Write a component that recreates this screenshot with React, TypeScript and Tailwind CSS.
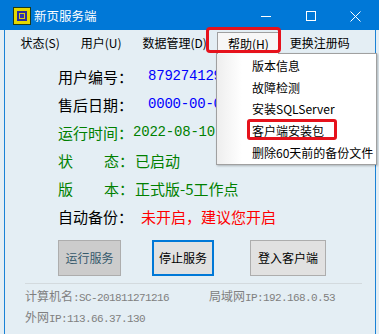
import React from "react";

const Mono = ({ children, className = "" }: { children: React.ReactNode; className?: string }) => (
  <span className={`font-['Liberation_Mono',monospace] ${className}`}>{children}</span>
);

const menuItems = ["状态(S)", "用户(U)", "数据管理(D)"];
const helpItems = ["版本信息", "故障检测", "安装SQLServer", "客户端安装包", "删除60天前的备份文件"];

export default function App() {
  return (
    <div className="relative flex h-[334px] w-[379px] flex-col overflow-hidden bg-[#E4EEF4] font-['Noto_Sans_CJK_SC','Noto_Sans',sans-serif] text-black">
      {/* title bar */}
      <div className="flex h-[30px] shrink-0 items-center bg-[#0078D7] pt-[2px]">
        <svg className="ml-[13px]" width="18" height="18" viewBox="0 0 18 18">
          <rect width="18" height="18" fill="#1F3A15" />
          <rect x="1" y="1" width="16" height="16" fill="#E4D800" />
          <rect x="4" y="4" width="10" height="10" fill="#2C2C9C" />
          <rect x="6" y="6" width="6" height="6" fill="#D8CC10" />
          <rect x="7" y="7" width="4" height="4" fill="#3434B0" />
        </svg>
        <span className="ml-[3px] text-[12.5px] leading-none text-white">新页服务端</span>
        <div className="ml-auto mr-[1px] flex">
          <div className="flex h-[28px] w-[45px] items-center justify-center">
            <svg width="10" height="10" viewBox="0 0 10 10">
              <path d="M0 5.5H10" stroke="white" strokeWidth="1" />
            </svg>
          </div>
          <div className="flex h-[28px] w-[45px] items-center justify-center">
            <svg width="10" height="10" viewBox="0 0 10 10">
              <rect x="0.5" y="0.5" width="9" height="9" fill="none" stroke="white" strokeWidth="1" />
            </svg>
          </div>
          <div className="flex h-[28px] w-[45px] items-center justify-center">
            <svg width="11" height="11" viewBox="0 0 11 11">
              <path d="M0.5 0.5L10.5 10.5M10.5 0.5L0.5 10.5" stroke="white" strokeWidth="1" />
            </svg>
          </div>
        </div>
      </div>

      {/* window body */}
      <div className="ml-[4px] mr-[3px] flex flex-1 flex-col border-x border-[#1A82D6]">
        {/* menu bar */}
        <div className="flex h-[23px] items-start pl-[5px] pt-[2px] text-[12px]">
          {menuItems.map((m) => (
            <div key={m} className="flex h-[21px] items-center px-[10.5px] leading-none">
              {m}
            </div>
          ))}
          <div className="relative z-20 flex h-[22px] items-center border border-b-0 border-[#A0A0A0] bg-[#F7F7F7] px-[9.5px] leading-none">
            帮助(H)
          </div>
          <div className="flex h-[21px] items-center px-[10.5px] leading-none">更换注册码</div>
        </div>

        {/* info rows */}
        <div className="mt-[9px] flex flex-col text-[15px] leading-none">
          <div className="flex h-[28px] items-center pl-[53px]">
            <span className="w-[90px]">用户编号：</span>
            <Mono className="text-[14px] tracking-[-0.2px] text-[#0000FF]">879274129</Mono>
          </div>
          <div className="flex h-[28px] items-center pl-[53px]">
            <span className="w-[90px]">售后日期：</span>
            <Mono className="text-[14px] tracking-[-0.2px] text-[#0000FF]">0000-00-00</Mono>
          </div>
          <div className="flex h-[28px] items-center pl-[53px] text-[#008000]">
            <span className="w-[75px]">运行时间：</span>
            <Mono className="text-[14px] tracking-[-0.2px]">2022-08-10</Mono>
          </div>
          <div className="flex h-[28px] items-center pl-[53px] text-[#008000]">
            <span className="w-[46px]">状</span>
            <span className="w-[31px]">态：</span>
            <span>已启动</span>
          </div>
          <div className="flex h-[28px] items-center pl-[53px] text-[#008000]">
            <span className="w-[46px]">版</span>
            <span className="w-[31px]">本：</span>
            <span>正式版-5工作点</span>
          </div>
          <div className="flex h-[28px] items-center pl-[53px]">
            <span className="w-[83px]">自动备份：</span>
            <span className="text-[#FF0000]">未开启，建议您开启</span>
          </div>
        </div>

        {/* buttons */}
        <div className="mt-[10px] flex h-[36px] pl-[53px] text-[12px] leading-none">
          <button className="h-[36px] w-[63px] border border-[#ADADAD] bg-[#CCCCCC] text-[#35596B]">运行服务</button>
          <button className="ml-[31px] h-[36px] w-[62px] border-2 border-[#0078D7] bg-[#E1E1E1]">停止服务</button>
          <button className="ml-[36px] h-[36px] w-[76px] border border-[#ADADAD] bg-[#E1E1E1]">登入客户端</button>
        </div>

        <div className="ml-[20px] mr-[13px] mt-[7px] border-t border-[#D3DADE]" />

        {/* footer info */}
        <div className="flex flex-col pl-[20px] pt-[2px] text-[12px] leading-none text-[#808080]">
          <div className="flex h-[21px] items-center">
            <span className="w-[184px]">
              计算机名<Mono className="text-[11px] tracking-[-0.6px]">:SC-201811271216</Mono>
            </span>
            <span>
              局域网<Mono className="text-[11px] tracking-[-0.6px]">IP:192.168.0.53</Mono>
            </span>
          </div>
          <div className="flex h-[21px] items-center">
            <span>
              外网<Mono className="text-[11px] tracking-[-0.6px]">IP:113.66.37.130</Mono>
            </span>
          </div>
        </div>
      </div>

      {/* help dropdown */}
      <div className="absolute left-[216px] top-[53px] z-10 flex h-[112px] w-[161px] border border-[#A0A0A0] bg-white shadow-[1px_1px_2px_rgba(0,0,0,0.25)]">
        <div className="w-[25px] bg-gradient-to-r from-[#EEEEEE] to-white" />
        <div className="flex flex-col pl-[10px] pt-[1px] text-[12px] leading-none">
          {helpItems.map((h) => (
            <div key={h} className="flex h-[22px] items-center whitespace-nowrap">
              {h}
            </div>
          ))}
        </div>
      </div>

      {/* red highlight marks */}
      <div className="absolute left-[206px] top-[27px] z-30 h-[26px] w-[75px] rounded-[4px] border-[3px] border-[#E6121C]" />
      <div className="absolute left-[247px] top-[119px] z-30 h-[21px] w-[90px] rounded-[3px] border-[3px] border-[#E6121C]" />
    </div>
  );
}
